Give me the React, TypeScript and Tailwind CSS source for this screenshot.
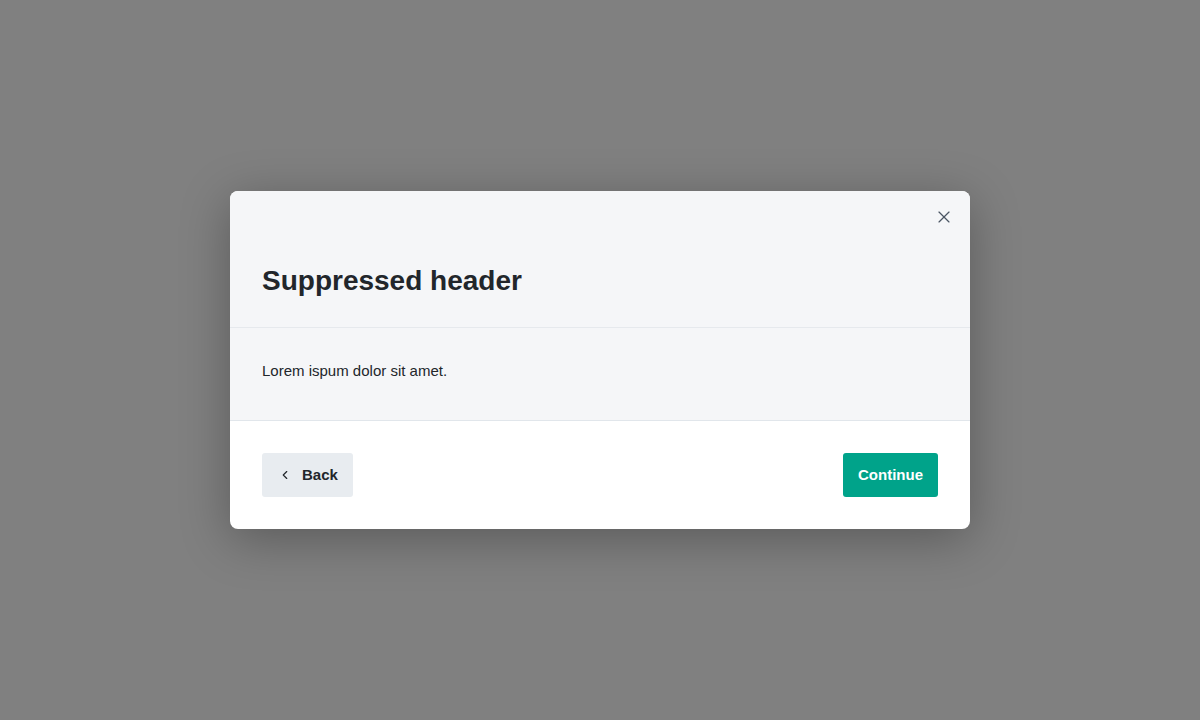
import { X, ChevronLeft } from "lucide-react";

export default function App() {
  return (
    <div
      className="w-full h-[720px] bg-[#808080] flex items-center justify-center"
      style={{ fontFamily: '"Liberation Sans", Arial, sans-serif' }}
    >
      <div className="w-[740px] bg-white rounded-lg overflow-hidden shadow-[0_10px_50px_rgba(0,0,0,0.3)]">
        <div className="relative bg-[#f5f6f8] border-b border-[#e6e9ed] px-8 pt-[72px] pb-[28px]">
          <button className="absolute top-[16px] right-[16px] text-[#4b5563]">
            <X className="w-[20px] h-[20px]" strokeWidth={1.4} />
          </button>
          <h2 className="text-[28px] leading-[36px] font-bold text-[#22262b]">
            Suppressed header
          </h2>
        </div>
        <div className="bg-[#f5f6f8] border-b border-[#e1e6eb] px-8 pt-[29px] pb-[35px]">
          <p className="text-[15px] leading-[28px] text-[#22262b]">Lorem ispum dolor sit amet.</p>
        </div>
        <div className="flex items-center justify-between px-8 pt-[32px] pb-[32px]">
          <button className="h-[44px] w-[91px] flex items-center gap-[10px] pl-[16px] bg-[#e8ecf0] rounded-[3px] text-[15px] font-bold text-[#22262b]">
            <ChevronLeft className="w-[14px] h-[14px]" strokeWidth={2} />
            Back
          </button>
          <button className="h-[44px] w-[95px] flex items-center justify-center bg-[#00a38a] rounded-[3px] text-[15px] font-bold text-white">
            Continue
          </button>
        </div>
      </div>
    </div>
  );
}
